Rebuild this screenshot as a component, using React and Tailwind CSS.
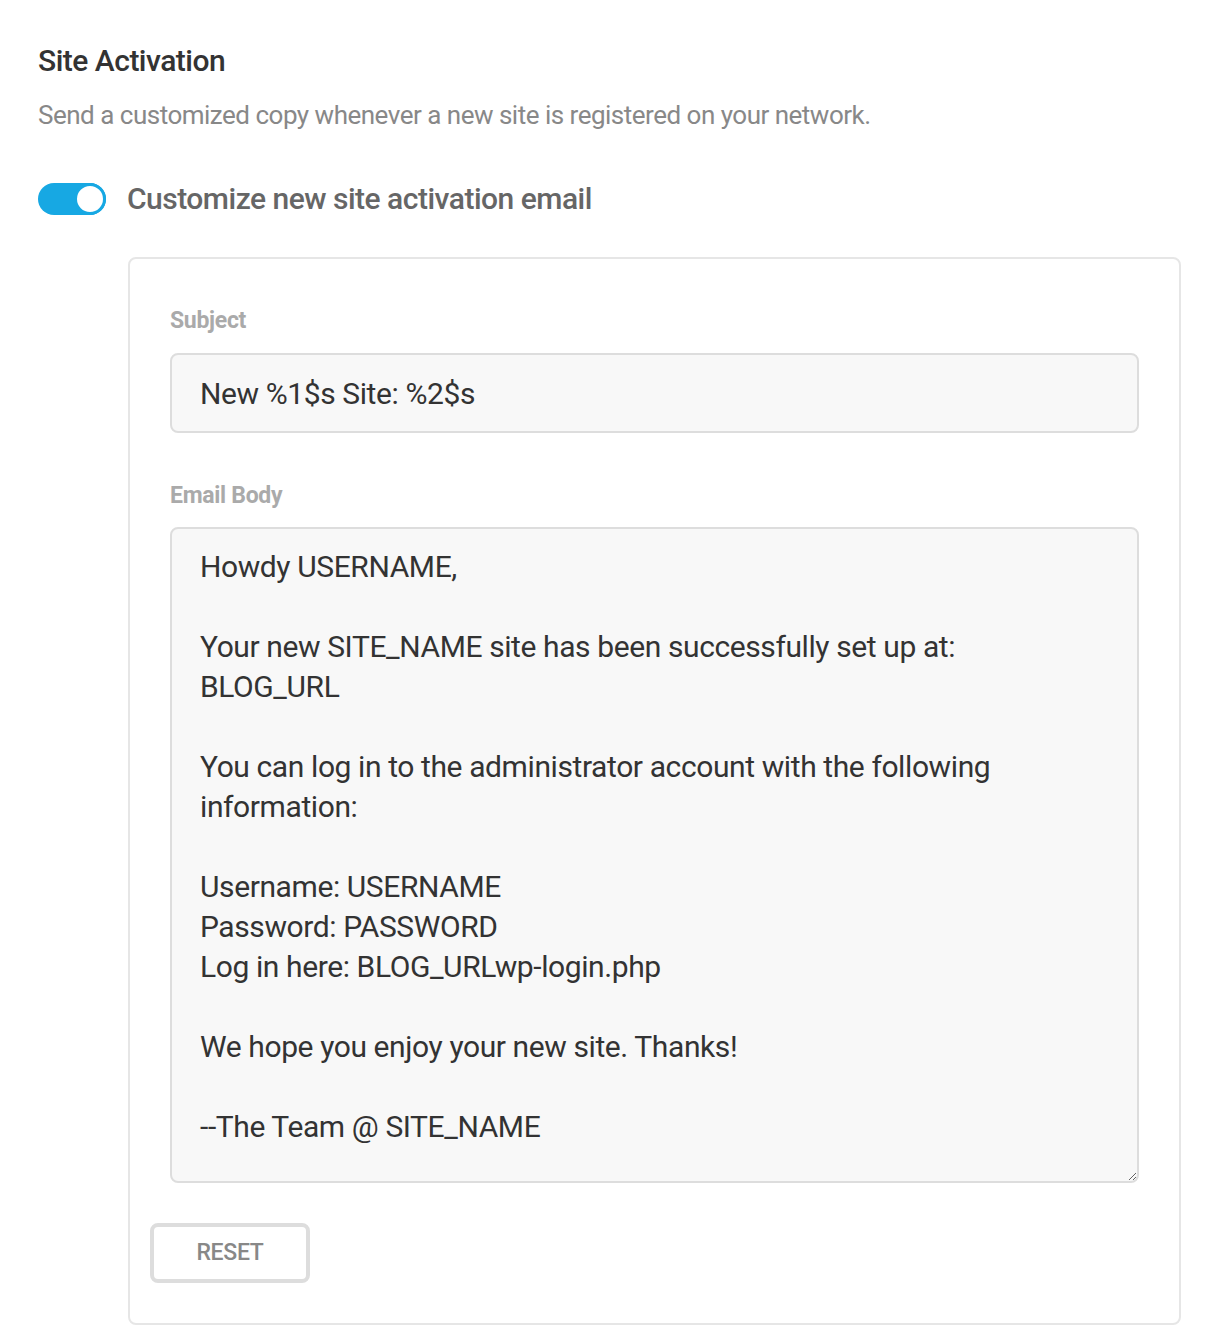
import React, { useState } from "react";

const defaultSubject = "New %1$s Site: %2$s";

const defaultBody = `Howdy USERNAME,

Your new SITE_NAME site has been successfully set up at:
BLOG_URL

You can log in to the administrator account with the following information:

Username: USERNAME
Password: PASSWORD
Log in here: BLOG_URLwp-login.php

We hope you enjoy your new site. Thanks!

--The Team @ SITE_NAME`;

const Toggle = ({ checked, onChange }) => (
  <button
    type="button"
    onClick={() => onChange(!checked)}
    className={`relative h-[32px] w-[68px] shrink-0 rounded-full ${
      checked ? "bg-[#17a8e3]" : "bg-[#e6e6e6]"
    }`}
  >
    <span
      className={`absolute top-0 h-[32px] w-[32px] rounded-full border-[3px] bg-white ${
        checked ? "right-0 border-[#17a8e3]" : "left-0 border-[#e6e6e6]"
      }`}
    />
  </button>
);

export default function App() {
  const [enabled, setEnabled] = useState(true);
  const [subject, setSubject] = useState(defaultSubject);
  const [body, setBody] = useState(defaultBody);

  const reset = () => {
    setSubject(defaultSubject);
    setBody(defaultBody);
  };

  return (
    <div
      className="min-h-screen bg-white pl-[38px] pr-[39px] pt-[39px]"
      style={{ fontFamily: "Roboto, 'Liberation Sans', sans-serif" }}
    >
      <h2 className="text-[30px] font-medium leading-[44px] tracking-[-0.5px] text-[#333]">
        Site Activation
      </h2>
      <p className="mt-[10px] text-[26px] leading-[44px] tracking-[-0.5px] text-[#888]">
        Send a customized copy whenever a new site is registered on your network.
      </p>

      <div className="mt-[40px] flex items-center gap-[21px]">
        <Toggle checked={enabled} onChange={setEnabled} />
        <span className="text-[30px] font-medium leading-[44px] tracking-[-0.5px] text-[#666]">
          Customize new site activation email
        </span>
      </div>

      {enabled && (
        <div className="ml-[90px] mt-[36px] rounded-[8px] border-2 border-[#e6e6e6] px-[40px] pb-[40px] pt-[46px]">
          <label className="block text-[23px] font-bold leading-[32px] tracking-[-0.3px] text-[#aaa]">
            Subject
          </label>
          <input
            value={subject}
            onChange={(e) => setSubject(e.target.value)}
            className="mt-[16px] block h-[80px] w-full rounded-[8px] border-2 border-[#ddd] bg-[#f8f8f8] px-[28px] text-[30px] leading-[40px] tracking-[-0.4px] text-[#333] outline-none"
          />

          <label className="mt-[47px] block text-[23px] font-bold leading-[32px] tracking-[-0.3px] text-[#aaa]">
            Email Body
          </label>
          <textarea
            value={body}
            onChange={(e) => setBody(e.target.value)}
            className="mt-[15px] block h-[656px] w-full resize-y rounded-[8px] border-2 border-[#ddd] bg-[#f8f8f8] px-[28px] py-[18px] text-[30px] leading-[40px] tracking-[-0.4px] text-[#333] outline-none"
          />

          <button
            type="button"
            onClick={reset}
            className="-ml-[20px] mt-[40px] h-[60px] w-[160px] rounded-[8px] border-4 border-[#ddd] bg-white text-[23px] font-medium uppercase tracking-[-0.3px] text-[#888]"
          >
            Reset
          </button>
        </div>
      )}
    </div>
  );
}
